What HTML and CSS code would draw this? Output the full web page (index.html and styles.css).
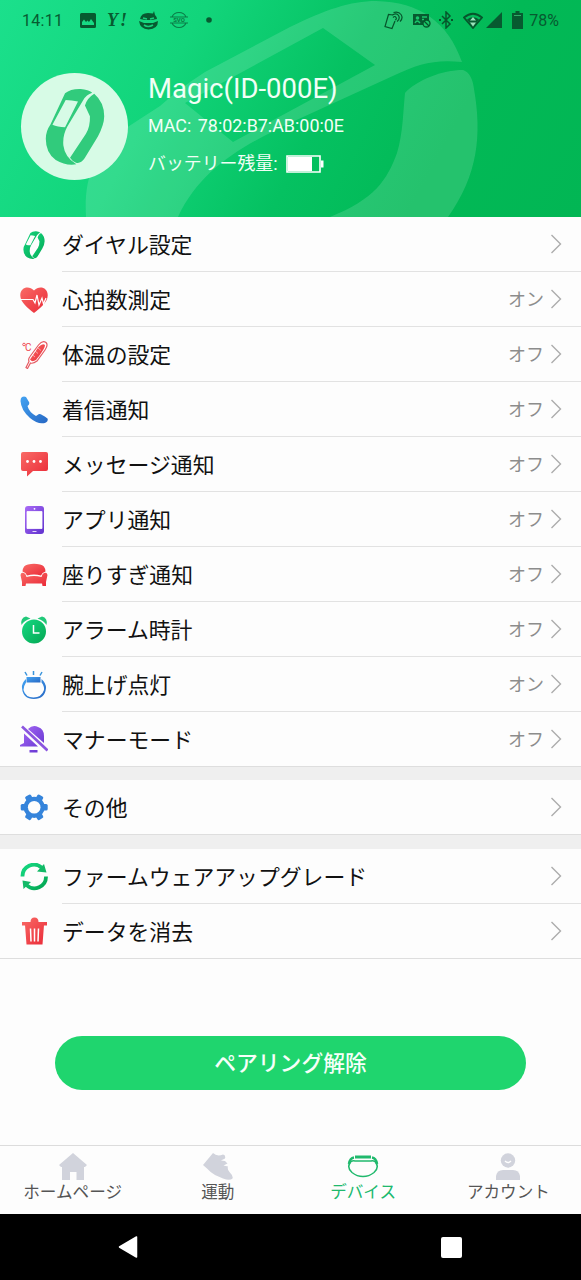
FILE: index.html
```
<!DOCTYPE html>
<html lang="ja">
<head>
<meta charset="utf-8">
<title>デバイス</title>
<link rel="stylesheet" href="styles.css">
</head>
<body>
<svg class="defs" width="0" height="0" aria-hidden="true">
  <defs>
    <linearGradient id="green" x1="0" y1="0" x2="1" y2="1"><stop offset="0" stop-color="#16d982"/><stop offset="1" stop-color="#04a652"/></linearGradient>
    <linearGradient id="red" x1="0" y1="0" x2="1" y2="1"><stop offset="0" stop-color="#f96b66"/><stop offset="1" stop-color="#ea2937"/></linearGradient>
    <linearGradient id="blue" x1="0" y1="0" x2="1" y2="1"><stop offset="0" stop-color="#43a3f2"/><stop offset="1" stop-color="#2768c4"/></linearGradient>
    <linearGradient id="purple" x1="0" y1="0" x2="1" y2="1"><stop offset="0" stop-color="#a96bf6"/><stop offset="1" stop-color="#6032ce"/></linearGradient>
    <symbol id="chevron" viewBox="0 0 12 20"><path d="M1.500 1l9 9-9 9" fill="none" stroke="#acacac" stroke-width="1.400"/></symbol>
    <symbol id="band" viewBox="88 62 180 232">
      <path fill-rule="evenodd" d="M148 78Q165 64 195 65Q218 67 230 76Q212 82 203 98L155 178Q140 205 143 235Q147 270 182 292Q150 297 120 279Q90 258 90 215Q90 192 104 172ZM150 98L110 173Q125 180 148 180L187 103Q168 98 150 98Z"/>
      <path d="M208 115Q214 92 236 79Q266 105 266 147Q266 172 247 208L207 274Q195 291 181 287Q170 283 163 272L211 200Q224 178 223 147Z"/>
    </symbol>
  </defs>
</svg>

<header class="hero">
  <svg class="watermark" viewBox="0 0 581 217" fill="#fff" fill-opacity=".14">
    <path fill-rule="evenodd" d="M86 217C84 180 92 155 123 130L160 106Q180 88 205 72L290 27C325 10 350 1 376 1C420 2 448 22 462 62C435 59 418 64 395 75L290 123C240 147 200 170 178 217ZM185 103L233 142L375 65L323 28Z"/>
    <path d="M405 93C417 80 442 70 463 70Q472 73 474 89C482 135 478 175 448 217H330C375 199 387 180 397 153C403 133 403 112 405 93Z"/>
  </svg>

  <div class="status">
    <span class="clock">14:11</span>
    <div class="status-left">
      <svg width="16" height="15" viewBox="0 0 16 15"><path fill-rule="evenodd" d="M1.500 0h13Q16 0 16 1.500v12Q16 15 14.500 15h-13Q0 15 0 13.500v-12Q0 0 1.500 0ZM2 12h12v-2l-3-4-2 3-1.500-1.500L6 9 4 6.500 2 9Z"/></svg>
      <span class="yahoo">Y!</span>
      <svg width="19" height="19" viewBox="0 0 19 19"><path d="M1 8Q2 2 9 2l5 .5L15 0l1 4q2 2 2 4l-5 1H6Z"/><path d="M0 10l5 2h9l5-2q0 8-9.500 8.500Q1 18 0 10Z"/><path d="M4 7l4 1M15 7l-4 1M5 14q4 3 9 0" fill="none" stroke="#18cf7b" stroke-width="1.600"/></svg>
      <svg width="20" height="18" viewBox="0 0 20 18" opacity=".75"><path d="M3 6a7.500 7 0 0 1 14 0M3 12a7.500 7 0 0 0 14 0M1 6h18M1 12h18" fill="none" stroke="#085f36" stroke-width="1.100"/><text x="10" y="11.200" text-anchor="middle" font-size="6" font-weight="bold">SVO</text></svg>
      <svg width="6" height="6" viewBox="0 0 6 6"><circle cx="3" cy="3" r="2.800"/></svg>
    </div>
    <div class="status-right">
      <svg width="19" height="19" viewBox="0 0 19 19" fill="none" stroke="#06552b" stroke-width="1.200"><path d="M9 4L4.500 3.500 1 15.500l7 2L11 10"/><path d="M9 6.500q2-2 3 0t-1 2.500M8.500 4q4-2.500 6 .5t-1.500 6M9.500 1.500q5-1.500 7.500 2t-1 7"/></svg>
      <svg width="18" height="15" viewBox="0 0 18 15"><path d="M0 1h16v6l-4 1-2 4H0Z"/><path d="M2 10q2-4 5 0M9 4h5M9 6.500h2" fill="none" stroke="#19c86c" stroke-width="1.300"/><circle cx="4.500" cy="5" r="1.800" fill="#19c86c"/><circle cx="13.500" cy="10.500" r="3.500" fill="#19c567" stroke="#06552b" stroke-width="1.300"/><path d="M11 8l5 5" stroke="#06552b" stroke-width="1.200"/></svg>
      <svg width="15" height="18" viewBox="0 0 15 18" fill="none" stroke="#06552b" stroke-width="1.500"><path d="M3 5l8 8-4 4V1l4 4-8 8"/><path d="M1 8v2M13 8v2" stroke-width="2"/></svg>
      <svg width="20" height="17" viewBox="0 0 20 17"><path d="M1 5.500Q10-2 19 5.500L10 16Z" fill="none" stroke="#06552b" stroke-width="1.700"/><path d="M4 7.500Q10 3 16 7.500L10 15Z"/><path d="M7 8.500L10 5l3 3.500ZM7 10.500L10 14.500l3-4Z" fill="#9ce3bb"/></svg>
      <svg width="16" height="16" viewBox="0 0 16 16"><path d="M16 0v16H0Z"/></svg>
      <svg class="cell" width="11" height="18" viewBox="0 0 11 18"><path d="M3.500 0h4v2H11v16H0V2h3.500Z"/><path d="M2 4.500h7" stroke="#2fac67"/></svg>
      <span class="percent">78%</span>
    </div>
  </div>

  <div class="device">
    <div class="avatar"><svg width="60" height="77" fill="#31cb7c"><use href="#band"/></svg></div>
    <div class="details">
      <h1 class="name">Magic(ID-000E)</h1>
      <p class="mac">MAC: 78:02:B7:AB:00:0E</p>
      <p class="battery"><span>バッテリー残量:</span>
        <svg width="38" height="18" viewBox="0 0 38 18"><path d="M1 1h33v16H1Z" fill="none" stroke="#fff" stroke-width="1.600"/><path d="M2 2h24v14H2ZM35 5.500h2.500v7H35Z" fill="#fff"/></svg>
      </p>
    </div>
  </div>
</header>

<main class="settings">
  <ul class="group">
    <li class="row"><span class="icon"><svg viewBox="0 0 28 28" fill="url(#green)"><use href="#band" x="2.500" y="0" width="23" height="28"/></svg></span><div class="line"><span class="label">ダイヤル設定</span><svg class="chevron"><use href="#chevron"/></svg></div></li>
    <li class="row"><span class="icon"><svg viewBox="0 0 28 28"><path fill="url(#red)" d="M14 27C8 22 0 16 .3 9C.5 1 9-1 14 4.500C19-1 27.500 1 27.700 9C28 16 20 22 14 27Z"/><path d="M0 13.500h13l2 3.500 2-8 2 10 3-7 1.500 6L26 12" fill="none" stroke="#fff" stroke-width="1.200"/></svg></span><div class="line"><span class="label">心拍数測定</span><span class="value">オン</span><svg class="chevron"><use href="#chevron"/></svg></div></li>
    <li class="row"><span class="icon"><svg viewBox="0 0 28 28"><circle cx="4" cy="3.500" r="1.300" fill="none" stroke="#ef4650" stroke-width=".9"/><text x="5" y="9.500" font-size="10" fill="#ef4650">C</text><path d="M18.500 4Q22.500-1 26 1.500Q28.500 4 25 9L17 20Q13 23 10.500 22L7.500 27.500L6 26.500L9 20.500Q8 18 10 15.500Z" fill="#fff" stroke="#e65a62" stroke-width="1.200"/><path d="M18.500 6Q22.500 2 25 4Q25.500 7 16 19Q12 21.500 10 18.500Z" fill="url(#red)"/><path d="M12 13.500l3 2.500M15 10l3 2.500M18 7l3 2.500" stroke="#fff" stroke-width=".5"/></svg></span><div class="line"><span class="label">体温の設定</span><span class="value">オフ</span><svg class="chevron"><use href="#chevron"/></svg></div></li>
    <li class="row"><span class="icon"><svg viewBox="0 0 28 28"><path fill="url(#blue)" d="M2 1Q4 0 6 1L9 6Q10 8 7.500 10Q9 16 16 20L19 18Q21 17.500 27.500 22.500Q28.500 25 26 26.500Q19 29.500 10 22Q1 14 .5 5Q.5 2 2 1Z"/></svg></span><div class="line"><span class="label">着信通知</span><span class="value">オフ</span><svg class="chevron"><use href="#chevron"/></svg></div></li>
    <li class="row"><span class="icon"><svg viewBox="0 0 28 28"><path fill="url(#red)" d="M3 1h23q2 0 2 2v15q0 2-2 2H13l-6 5.500v-5.500H3q-2 0-2-2V3q0-2 2-2Z"/><g fill="#fff"><circle cx="7.500" cy="10.500" r="1.400"/><circle cx="14" cy="10.500" r="1.400"/><circle cx="20.500" cy="10.500" r="1.400"/></g></svg></span><div class="line"><span class="label">メッセージ通知</span><span class="value">オフ</span><svg class="chevron"><use href="#chevron"/></svg></div></li>
    <li class="row"><span class="icon"><svg viewBox="0 0 28 28"><rect x="5" y="0" width="19" height="28" rx="3" fill="url(#purple)"/><path d="M7 5.500h15v17h-15ZM12.500 25.500h4" fill="#fff" stroke="#fff" stroke-width=".8"/><circle cx="14.500" cy="2.800" r=".9" fill="#fff"/></svg></span><div class="line"><span class="label">アプリ通知</span><span class="value">オフ</span><svg class="chevron"><use href="#chevron"/></svg></div></li>
    <li class="row"><span class="icon"><svg viewBox="0 0 28 28" fill="url(#red)"><path d="M2.500 10.500Q3 4 8 3.500Q14 2 20 3.500Q25 4 25.500 10.500Q22 11.500 21 14.500Q14 12.500 7 14.500Q6 11.500 2.500 10.500Z"/><path d="M.5 14Q1 11 4 12Q6 13 6.500 16Q14 14 21.500 16Q22 13 24 12Q27 11 27.500 14L26 21V25H22.500L22 22.500H6L5.500 25H2V21Z"/></svg></span><div class="line"><span class="label">座りすぎ通知</span><span class="value">オフ</span><svg class="chevron"><use href="#chevron"/></svg></div></li>
    <li class="row"><span class="icon"><svg viewBox="0 0 28 28"><path fill="#21c979" d="M1.500 9Q0 2 6 .5L10.500 2.500Q4 4.500 1.500 9ZM26.500 9Q28 2 22 .5L17.500 2.500Q24 4.500 26.500 9Z"/><circle cx="14" cy="15.500" r="12" fill="url(#green)"/><path d="M13.500 9v8h6" fill="none" stroke="#fff" stroke-width="1.500"/></svg></span><div class="line"><span class="label">アラーム時計</span><span class="value">オフ</span><svg class="chevron"><use href="#chevron"/></svg></div></li>
    <li class="row"><span class="icon"><svg viewBox="0 0 28 28"><path d="M5 1l2 3.500M13.500 0v4M22 1l-2 3.500" stroke="#3994dc" stroke-width="1.500"/><path fill="url(#blue)" d="M6.500 6h14v5.500h-14Z"/><path fill="url(#blue)" fill-rule="evenodd" d="M6 8Q1.500 12 2 17Q3 28 13.800 28Q25 28 26 17Q26 12 21.500 8V11.500Q24.500 15 24 19Q21.500 26.500 13.500 26.500Q5.500 26.500 3.500 19Q3.500 15 6 11.500Z"/></svg></span><div class="line"><span class="label">腕上げ点灯</span><span class="value">オン</span><svg class="chevron"><use href="#chevron"/></svg></div></li>
    <li class="row last"><span class="icon"><svg viewBox="0 0 28 28" fill="url(#purple)"><path d="M8 4Q13-1 18 2Q24 4 24 11V18ZM4 8.500L18 21.500H0V20L4 18ZM9.500 25h8v2.500h-8Z"/><path d="M2 1.500l25.500 24" stroke="#8b55df" stroke-width="2.700"/></svg></span><div class="line"><span class="label">マナーモード</span><span class="value">オフ</span><svg class="chevron"><use href="#chevron"/></svg></div></li>
  </ul>

  <ul class="group">
    <li class="row last"><span class="icon"><svg viewBox="0 0 28 28" fill="#3584db"><circle cx="14.200" cy="14.300" r="10.600"/><rect x=".7" y="11" width="27" height="6.600" rx="1.500"/><rect x=".7" y="11" width="27" height="6.600" rx="1.500" transform="rotate(60 14.200 14.300)"/><rect x=".7" y="11" width="27" height="6.600" rx="1.500" transform="rotate(120 14.200 14.300)"/><circle cx="14.200" cy="14.300" r="6.300" fill="#fdfdfd"/></svg></span><div class="line"><span class="label">その他</span><svg class="chevron"><use href="#chevron"/></svg></div></li>
  </ul>

  <ul class="group">
    <li class="row"><span class="icon"><svg viewBox="0 0 28 28"><path d="M2.500 13.500A11.500 11.500 0 0 1 21.500 4.500M26 13.500A11.500 11.500 0 0 1 6.500 22" fill="none" stroke="url(#green)" stroke-width="3.800"/><path fill="#13b967" d="M24 1L26.500 9.500L17 8.500ZM3.500 26L2.500 17.500L11 19Z"/></svg></span><div class="line"><span class="label">ファームウェアアップグレード</span><svg class="chevron"><use href="#chevron"/></svg></div></li>
    <li class="row last"><span class="icon"><svg viewBox="0 0 28 28"><path fill="url(#red)" d="M2 5H10.500Q10.500 .5 14.500 .5Q18.500 .5 18.500 5H27V8.500H2ZM5 8H24L22.500 27.500H6.500Z"/><path d="M10.500 11.500l.5 13M14.500 11.500v13M18.500 11.500l-.5 13" stroke="#fff" stroke-width="1.500"/></svg></span><div class="line"><span class="label">データを消去</span><svg class="chevron"><use href="#chevron"/></svg></div></li>
  </ul>
</main>

<section class="action"><button class="unpair">ペアリング解除</button></section>

<nav class="tabs">
  <div class="tab"><svg width="30" height="28" viewBox="0 0 30 28"><path fill="#d1d3dc" d="M15 0L29 12L27 14H26V27H18.500V19H12V27H4V14H3L1 12Z"/></svg><span>ホームページ</span></div>
  <div class="tab"><svg width="30" height="28" viewBox="0 0 30 28"><path fill="#d1d3dc" d="M0 12L10 0Q14 4 20 1.500Q23 2 22 5.500L18 7.500L22 8L24.500 10.500L20.500 12.500L25 13.500Q24 16 26.500 19Q30.500 23 29.500 25.500Q27 28 20 25.500L12 22Q7 19 4 15.500Z"/></svg><span>運動</span></div>
  <div class="tab active"><svg width="32" height="28" viewBox="0 0 32 28"><path fill="#20b96d" d="M8 2.500h16v3H8Z"/><path d="M7 4.500Q3 5 2 11M25 4.500Q29 5 30 11" fill="none" stroke="#20b96d" stroke-width="2.600"/><path d="M4 8.500Q6 7.500 8 8H24Q26 7.500 28 8.500Q33 14 27 19.500Q22 23.500 16 23.500Q10 23.500 5 19.500Q-1 14 4 8.500Z" fill="none" stroke="#20b96d" stroke-width="1.500"/></svg><span>デバイス</span></div>
  <div class="tab"><svg width="30" height="28" viewBox="0 0 30 28"><circle cx="15" cy="7.500" r="7.200" fill="#d1d3dc"/><path fill="#d1d3dc" d="M3 27V23Q4 17 10 17H20Q26 17 27 23V27Z"/><path d="M12 8q3 3 6 0" fill="none" stroke="#fff" stroke-width="1.400"/></svg><span>アカウント</span></div>
</nav>

<footer class="system-nav">
  <svg width="20" height="24" viewBox="0 0 20 24"><path d="M18.500 2v20L1.500 12Z" fill="#fff" stroke="#fff" stroke-linejoin="round" stroke-width="1.500"/></svg>
  <div class="square"></div>
</footer>
</body>
</html>
```

FILE: styles.css
```
* { box-sizing: border-box; }

body {
  margin: 0;
  width: 581px;
  height: 1280px;
  display: flex;
  flex-direction: column;
  overflow: hidden;
  background: #fdfdfd;
  color: #111;
  font-family: Roboto, "Noto Sans CJK JP", sans-serif;
}

svg { display: block; flex: none; }
.defs { position: absolute; }

.hero {
  position: relative;
  height: 217px;
  flex: none;
  background: linear-gradient(118deg, #1be08c 0%, #12d57b 30%, #05c161 55%, #02b956 75%, #02b654 100%);
}
.watermark { position: absolute; inset: 0; width: 581px; height: 217px; }

.status {
  position: relative;
  display: flex;
  align-items: center;
  height: 40px;
  padding: 0 22px;
  font-size: 16px;
  color: #075a30;
  fill: #075a30;
}
.clock { width: 58px; letter-spacing: .3px; }
.status-left { display: flex; align-items: center; gap: 11px; }
.status-left svg:last-child { margin-left: 6px; }
.yahoo {
  width: 21px;
  font: italic bold 18px/18px "Liberation Serif", serif;
  letter-spacing: 2px;
}
.status-right { display: flex; align-items: center; gap: 9px; margin-left: auto; }
.status-right svg:nth-child(2) { margin: 0 -1px 0 1px; }
.status-right svg:nth-child(5) { margin-left: -6px; }
.cell { margin-left: 1px; }
.percent { margin-left: -3px; }

.device { position: relative; display: flex; padding: 33px 21px 0; gap: 20px; }
.avatar {
  display: flex;
  align-items: center;
  justify-content: center;
  width: 107px;
  height: 107px;
  border-radius: 50%;
  background: #d7fbe6;
}
.details { color: #f1fff6; }
.name { margin: 0; font-size: 27.500px; line-height: 32px; font-weight: 400; }
.mac { margin: 8px 0 0; font-size: 17.900px; line-height: 26px; word-spacing: 2px; }
.battery {
  display: flex;
  align-items: center;
  gap: 8px;
  margin: 12px 0 0;
  font-size: 17.900px;
  line-height: 26px;
}

.settings { display: flex; flex-direction: column; flex: none; background: #efefef; }
.group { margin: 0; padding: 0; list-style: none; background: #fdfdfd; }
.group + .group { margin-top: 14px; }
.group:first-child + .group { margin-top: 13px; }
.row { display: flex; height: 55px; padding-left: 20px; }
.row.last { border-bottom: 1px solid #dedede; }
.icon { display: flex; align-items: center; width: 42px; }
.icon svg { width: 28px; height: 28px; }
.line {
  display: flex;
  flex: 1;
  align-items: center;
  padding-right: 19px;
  border-bottom: 1px solid #e2e2e2;
}
.row.last .line { border-bottom: 0; }
.label { flex: 1; padding-top: 3px; font-size: 21.850px; line-height: 30px; }
.value { padding-bottom: 2px; font-size: 18px; color: #8c8c8c; }
.chevron { width: 12px; height: 20px; margin-left: 6px; }

.action { flex: 1; padding: 77px 55px 0; }
.unpair {
  display: block;
  width: 471px;
  height: 54px;
  padding: 2px 0 0;
  border: 0;
  border-radius: 27px;
  background: #1fd56e;
  color: #f6fff9;
  font: 500 21.800px/52px Roboto, "Noto Sans CJK JP", sans-serif;
}

.tabs {
  display: grid;
  grid-template-columns: repeat(4, 1fr);
  height: 69px;
  flex: none;
  border-top: 1px solid #dcdcdc;
  background: #fdfdfd;
}
.tab {
  display: flex;
  flex-direction: column;
  align-items: center;
  padding-top: 7px;
  font-size: 16.600px;
  line-height: 24px;
  color: #555;
}
.tab.active { color: #20b96d; }

.system-nav {
  display: flex;
  align-items: center;
  gap: 303px;
  height: 66px;
  padding-left: 118px;
  flex: none;
  background: #000;
}
.square { width: 21px; height: 21px; border-radius: 2px; background: #fff; }
```
